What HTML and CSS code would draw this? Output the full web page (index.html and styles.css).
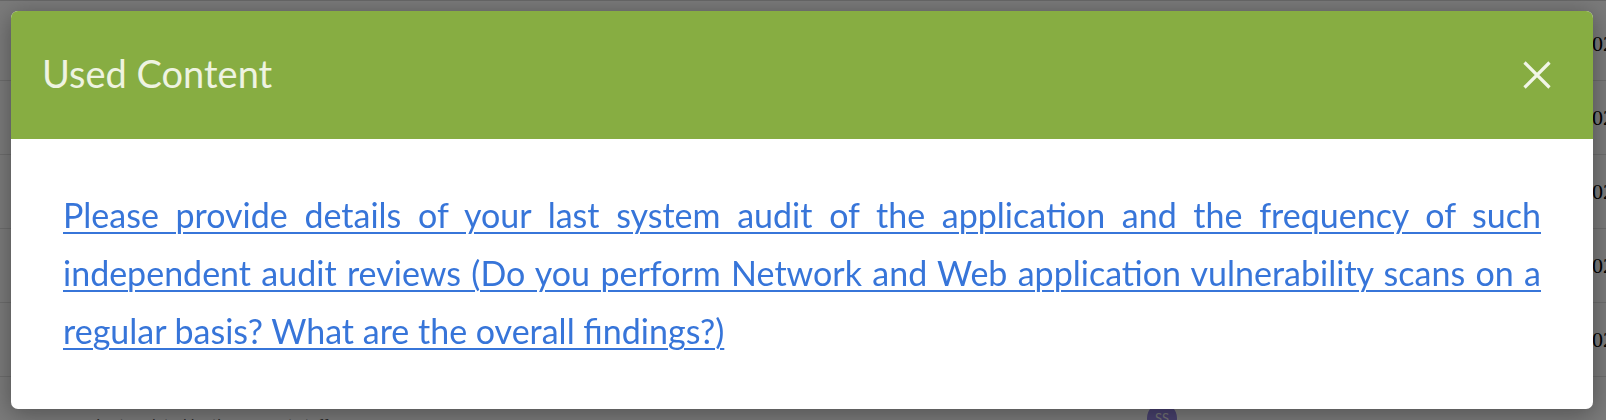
FILE: index.html
```html
<!DOCTYPE html>
<html lang="en">
<head>
    <meta charset="UTF-8">
    <meta name="viewport" content="width=device-width, initial-scale=1.0">
    <title>Used Content</title>
    <link rel="stylesheet" href="styles.css">
</head>
<body>
    <div class="page">
        <div class="row"><span class="cell-date">02/03/2023</span></div>
        <div class="row"><span class="cell-date">02/03/2023</span></div>
        <div class="row"><span class="cell-date">02/03/2023</span></div>
        <div class="row"><span class="cell-date">02/03/2023</span></div>
        <div class="row"><span class="cell-date">02/03/2023</span></div>
        <div class="row row-last">
            <span class="muted">Last updated by the support staff</span>
            <span class="avatar">SS</span>
        </div>
    </div>

    <div class="backdrop"></div>

    <div class="modal">
        <div class="modal-header">
            <h4 class="modal-title">Used Content</h4>
            <button class="close" aria-label="Close">
                <svg width="28" height="28" viewBox="0 0 28 28">
                    <path d="M1.5 1.5 L26.5 26.5 M26.5 1.5 L1.5 26.5" stroke="#f1f5e6" stroke-width="3.2" fill="none"/>
                </svg>
            </button>
        </div>
        <div class="modal-body">
            <p><a href="#">Please provide details of your last system audit of the application and the frequency of such independent audit reviews (Do you perform Network and Web application vulnerability scans on a regular basis? What are the overall findings?)</a></p>
        </div>
    </div>
</body>
</html>
```

FILE: styles.css
```css
html, body {
    margin: 0;
    height: 100%;
    overflow: hidden;
}
body {
    font-family: Lato, "Open Sans", sans-serif;
    background: #f4f4f4;
}
.page {
    padding-top: 6px;
    border-top: 1px solid #cfcfcf;
}
.row {
    height: 73px;
    border-bottom: 1px solid #d8d8d8;
    display: flex;
    align-items: center;
    justify-content: flex-end;
    overflow: hidden;
}
.cell-date {
    font-family: "Liberation Serif", serif;
    font-size: 22px;
    color: #000;
    margin-right: -96px;
    width: 110px;
    flex-shrink: 0;
}
.row-last {
    border-bottom: none;
    justify-content: flex-start;
    align-items: flex-start;
    padding-top: 37px;
}
.muted {
    margin-left: 96px;
    font-size: 16px;
    color: #555;
}
.avatar {
    margin-left: auto;
    margin-right: 429px;
    margin-top: -11px;
    width: 30px;
    height: 30px;
    border-radius: 50%;
    background: #8f80dc;
    color: #e6e6e6;
    font-size: 13px;
    display: flex;
    align-items: center;
    justify-content: center;
}
.backdrop {
    position: fixed;
    inset: 0;
    background: rgba(0, 0, 0, 0.5);
}
.modal {
    position: fixed;
    left: 11px;
    top: 11px;
    width: 1582px;
    height: 398px;
    background: #fff;
    border-radius: 7px;
    overflow: hidden;
    box-shadow: 0 4px 24px rgba(0, 0, 0, 0.35);
}
.modal-header {
    background: #87ad42;
    height: 128px;
    display: flex;
    align-items: center;
    justify-content: space-between;
    padding: 0 42px 0 31px;
}
.modal-title {
    margin: 0;
    font-size: 38px;
    font-weight: normal;
    color: #eef3e1;
    padding-bottom: 4px;
}
.close {
    background: none;
    border: 0;
    padding: 0;
    width: 28px;
    height: 28px;
    display: flex;
    cursor: pointer;
}
.modal-body {
    padding: 47px 52px 0 52px;
}
.modal-body p {
    margin: 0;
    font-size: 34px;
    line-height: 58px;
    text-align: justify;
}
.modal-body a {
    color: #3775d9;
    text-decoration-thickness: 2px;
    text-underline-offset: 4px;
}
```
